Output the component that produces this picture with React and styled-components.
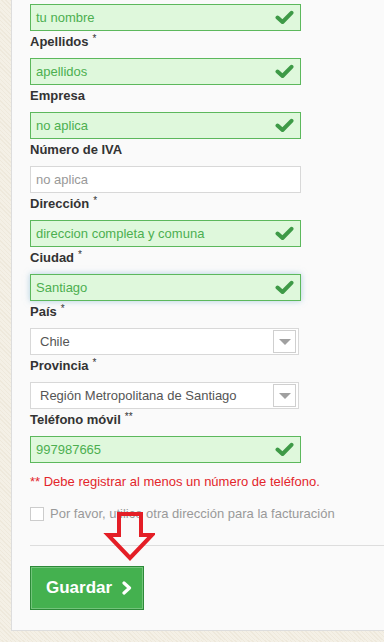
import React from "react";
import styled, { createGlobalStyle } from "styled-components";

const Global = createGlobalStyle`
  html, body { margin: 0; padding: 0; }
  body {
    background-color: #f4f0e6;
    background-image: repeating-linear-gradient(45deg, rgba(220,210,190,0.25) 0 1px, transparent 1px 3px);
    font-family: "Liberation Sans", Arial, sans-serif;
  }
`;

const Page = styled.div`
  display: flex;
  padding-bottom: 9px;
  width: 384px;
  overflow: hidden;
`;

const Panel = styled.div`
  position: relative;
  flex: 1;
  margin-left: 11px;
  background: #fafafa;
  border-left: 1px solid #ddd;
  border-bottom: 1px solid #ddd;
  padding: 4px 0 20px 18px;
`;

const Label = styled.div`
  height: 27px;
  box-sizing: border-box;
  padding-top: 1px;
  line-height: 20px;
  font-size: 13px;
  font-weight: bold;
  color: #333;
`;

const Req = styled.sup`
  font-size: 10px;
  font-weight: normal;
  vertical-align: top;
  line-height: 14px;
  margin-left: 4px;
`;

const InputBox = styled.div`
  position: relative;
  width: 271px;
  height: 27px;
  box-sizing: border-box;
  display: flex;
  align-items: center;
  padding: 0 6px 0 5px;
  font-size: 13px;
  border: 1px solid ${p => (p.$valid ? "#5cb85c" : "#d8d8d8")};
  background: ${p => (p.$valid ? "#dff8dc" : "#fff")};
  color: ${p => (p.$valid ? "#4caf50" : "#999")};
  box-shadow: ${p =>
    p.$focus ? "0 0 6px rgba(110,170,200,0.55)" : "none"};
`;

const InputText = styled.span`
  flex: 1;
`;

const CheckIcon = styled.svg`
  width: 19px;
  height: 15px;
  flex: none;
`;

const SelectBox = styled.div`
  width: 269px;
  height: 27px;
  box-sizing: border-box;
  border: 1px solid #d8d8d8;
  background: #fff;
  display: flex;
  align-items: center;
  padding: 0 2px 0 9px;
  font-size: 13px;
  color: #555;
`;

const SelectText = styled.span`
  flex: 1;
`;

const ArrowBox = styled.span`
  width: 23px;
  height: 23px;
  box-sizing: border-box;
  border: 1px solid #cfcfcf;
  display: flex;
  align-items: center;
  justify-content: center;
  &::after {
    content: "";
    border-left: 6px solid transparent;
    border-right: 6px solid transparent;
    border-top: 6px solid #a0a0a0;
    margin-top: 1px;
  }
`;

const ErrorText = styled.p`
  margin: 9px 0 0;
  font-size: 13px;
  line-height: 20px;
  color: #e3262b;
`;

const CheckRow = styled.label`
  display: flex;
  align-items: center;
  gap: 6px;
  margin-top: 12px;
  font-size: 13px;
  line-height: 20px;
  color: #999;
`;

const CheckSquare = styled.span`
  width: 14px;
  height: 14px;
  box-sizing: border-box;
  border: 1px solid #ccc;
  background: #fff;
`;

const Divider = styled.hr`
  margin: 21px 0 0;
  border: 0;
  border-top: 1px solid #ddd;
  height: 0;
`;

const Button = styled.button`
  margin-top: 20px;
  width: 114px;
  height: 44px;
  display: flex;
  align-items: center;
  gap: 9px;
  padding: 0 0 0 15px;
  box-sizing: border-box;
  background: #44b14f;
  border: 1px solid #2c8a38;
  box-shadow: inset 0 0 0 1px rgba(255, 255, 255, 0.25);
  color: #fff;
  font-family: "Liberation Sans", Arial, sans-serif;
  font-weight: bold;
  font-size: 17px;
  cursor: pointer;
`;

const Chevron = styled.svg`
  width: 12px;
  height: 14px;
`;

const Annotation = styled.svg`
  position: absolute;
  left: 83px;
  top: 508px;
`;

const Check = () => (
  <CheckIcon viewBox="0 0 19 15">
    <polyline
      points="2.5,7.5 7.5,12 16.5,2.8"
      fill="none"
      stroke="#3e9a47"
      strokeWidth="4"
      strokeLinecap="round"
      strokeLinejoin="round"
    />
  </CheckIcon>
);

const ValidInput = ({ children, focus }) => (
  <InputBox $valid $focus={focus}>
    <InputText>{children}</InputText>
    <Check />
  </InputBox>
);

const Select = ({ children }) => (
  <SelectBox>
    <SelectText>{children}</SelectText>
    <ArrowBox />
  </SelectBox>
);

export default function App() {
  return (
    <>
      <Global />
      <Page>
        <Panel>
          <ValidInput>tu nombre</ValidInput>
          <Label>Apellidos<Req>*</Req></Label>
          <ValidInput>apellidos</ValidInput>
          <Label>Empresa</Label>
          <ValidInput>no aplica</ValidInput>
          <Label>Número de IVA</Label>
          <InputBox><InputText>no aplica</InputText></InputBox>
          <Label>Dirección<Req>*</Req></Label>
          <ValidInput>direccion completa y comuna</ValidInput>
          <Label>Ciudad<Req>*</Req></Label>
          <ValidInput focus>Santiago</ValidInput>
          <Label>País<Req>*</Req></Label>
          <Select>Chile</Select>
          <Label>Provincia<Req>*</Req></Label>
          <Select>Región Metropolitana de Santiago</Select>
          <Label>Teléfono móvil<Req>**</Req></Label>
          <ValidInput>997987665</ValidInput>
          <ErrorText>** Debe registrar al menos un número de teléfono.</ErrorText>
          <CheckRow>
            <CheckSquare />
            Por favor, utilice otra dirección para la facturación
          </CheckRow>
          <Divider />
          <Button>
            Guardar
            <Chevron viewBox="0 0 12 14">
              <polyline
                points="3,2 8.5,7 3,12"
                fill="none"
                stroke="#fff"
                strokeWidth="3.2"
                strokeLinecap="round"
                strokeLinejoin="round"
              />
            </Chevron>
          </Button>
          <Annotation width="60" height="60" viewBox="0 0 60 60">
            <polygon
              points="24,6 46,6 46,27 57,27 35,50 13,27 24,27"
              fill="none"
              stroke="#e41e26"
              strokeWidth="4"
              strokeLinejoin="miter"
            />
          </Annotation>
        </Panel>
      </Page>
    </>
  );
}
